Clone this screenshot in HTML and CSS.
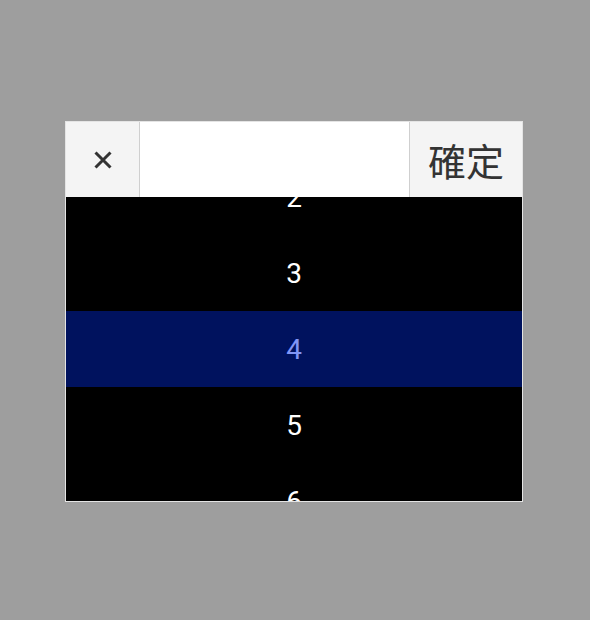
FILE: index.html
```html
<!DOCTYPE html>
<html lang="zh">
<head>
<meta charset="utf-8">
<title>Picker</title>
<link rel="stylesheet" href="styles.css">
</head>
<body>
<div class="stage">
  <div class="picker">
    <div class="header">
      <button class="btn close" aria-label="close">
        <svg width="18" height="18" viewBox="0 0 18 18"><path d="M1.5 1.5 L16.5 16.5 M16.5 1.5 L1.5 16.5" stroke="#333" stroke-width="3" stroke-linecap="butt"/></svg>
      </button>
      <div class="field"></div>
      <button class="btn confirm">確定</button>
    </div>
    <div class="list">
      <div class="track">
        <div class="row">2</div>
        <div class="row">3</div>
        <div class="row active">4</div>
        <div class="row">5</div>
        <div class="row">6</div>
      </div>
    </div>
  </div>
</div>
</body>
</html>
```
FILE: styles.css
```css
html, body {
  margin: 0;
  padding: 0;
  background: #9e9e9e;
}
.stage {
  padding: 121px 0 0 65px;
}
.picker {
  width: 456px;
  border: 1px solid #e4e4e4;
  background: #000;
}
.header {
  display: flex;
  height: 75px;
  background: #fff;
}
.btn {
  margin: 0;
  padding: 0;
  border: none;
  background: #f4f4f4;
  display: flex;
  align-items: center;
  justify-content: center;
  font-family: "Noto Sans CJK TC", "Noto Sans CJK SC", sans-serif;
  color: #333;
}
.close {
  width: 74px;
  border-right: 1px solid #cfcfcf;
  box-sizing: border-box;
}
.field {
  flex: 1;
  background: #fff;
}
.confirm {
  width: 113px;
  border-left: 1px solid #cfcfcf;
  box-sizing: border-box;
  font-size: 38px;
  line-height: 1;
}
.list {
  height: 304px;
  overflow: hidden;
  background: #000;
}
.track {
  margin-top: -38px;
}
.row {
  height: 76px;
  display: flex;
  align-items: center;
  justify-content: center;
  color: #fff;
  font-family: Roboto, "Liberation Sans", sans-serif;
  font-size: 28px;
}
.row.active {
  background: #00125e;
  color: #8196f5;
}
```
